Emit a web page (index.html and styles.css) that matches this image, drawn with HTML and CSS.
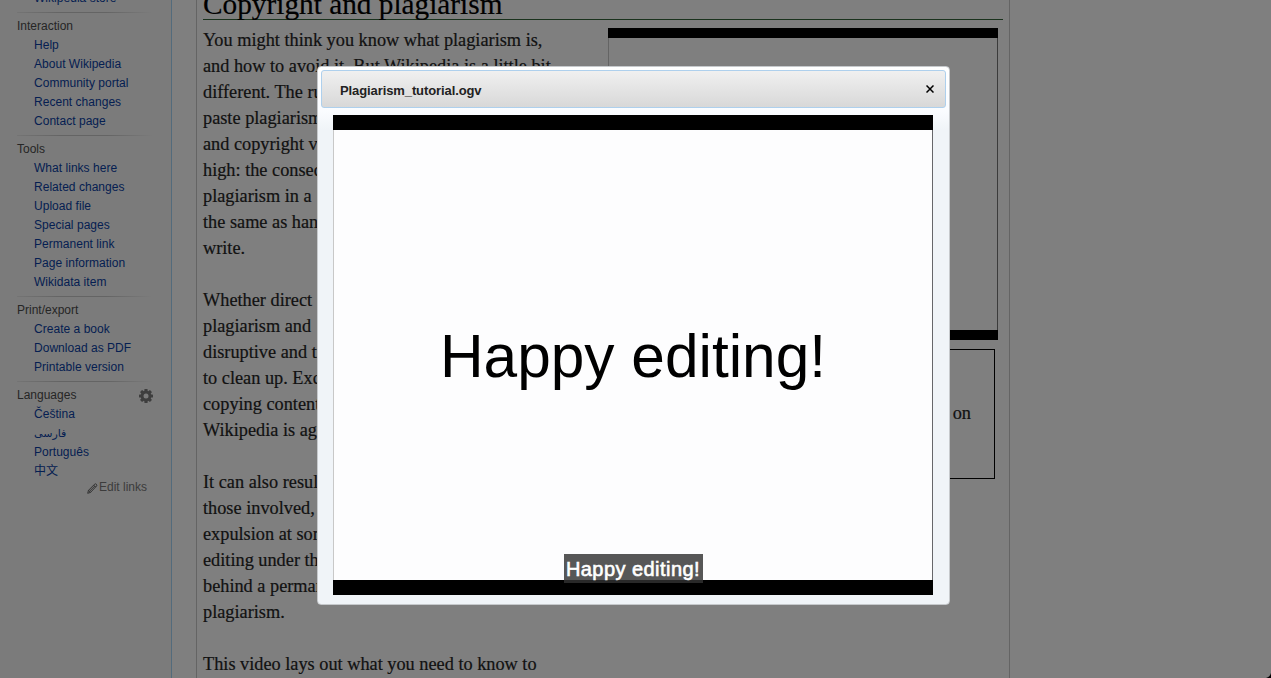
FILE: index.html
```html
<!DOCTYPE html>
<html lang="en">
<head>
<meta charset="utf-8">
<title>Copyright and plagiarism</title>
<link rel="stylesheet" href="styles.css">
</head>
<body>
<div class="page">
  <nav class="sidebar">
    <ul class="links"><li><a>Wikipedia store</a></li></ul>
    <section class="portal">
      <h3>Interaction</h3>
      <ul class="links">
        <li><a>Help</a></li><li><a>About Wikipedia</a></li><li><a>Community portal</a></li><li><a>Recent changes</a></li><li><a>Contact page</a></li>
      </ul>
    </section>
    <section class="portal">
      <h3>Tools</h3>
      <ul class="links">
        <li><a>What links here</a></li><li><a>Related changes</a></li><li><a>Upload file</a></li><li><a>Special pages</a></li><li><a>Permanent link</a></li><li><a>Page information</a></li><li><a>Wikidata item</a></li>
      </ul>
    </section>
    <section class="portal">
      <h3>Print/export</h3>
      <ul class="links">
        <li><a>Create a book</a></li><li><a>Download as PDF</a></li><li><a>Printable version</a></li>
      </ul>
    </section>
    <section class="portal">
      <h3>Languages
        <svg class="gear" viewBox="0 0 14 14"><g fill="#7c7c7c"><rect x="5.4" y="0" width="3.2" height="14" rx=".6"/><rect x="5.4" y="0" width="3.2" height="14" rx=".6" transform="rotate(45 7 7)"/><rect x="5.4" y="0" width="3.2" height="14" rx=".6" transform="rotate(90 7 7)"/><rect x="5.4" y="0" width="3.2" height="14" rx=".6" transform="rotate(135 7 7)"/><circle cx="7" cy="7" r="5.4"/></g><circle cx="7" cy="7" r="2.5" fill="#f6f6f6"/></svg>
      </h3>
      <ul class="links">
        <li><a>Čeština</a></li><li><a class="fa" lang="fa">فارسی</a></li><li><a>Português</a></li><li><a lang="zh">中文</a></li>
      </ul>
      <div class="edit"><svg class="pencil" viewBox="0 0 11 11"><path d="M.7 10.3l.8-3L7.6 1.2q.9-.8 1.8.1t.1 1.8L3.5 9.4zM1.5 7.3l2 2.1M6.7 2.1l2 2M2.6 8.2l5.1-5.1" fill="none" stroke="#565656" stroke-width=".9"/></svg><span>Edit links</span></div>
    </section>
  </nav>
  <main class="content">
    <h2>Copyright and plagiarism</h2>
    <div class="columns">
      <div class="article">
        <p><span>You might think you know what plagiarism is,</span><span>and how to avoid it. But Wikipedia is a little bit</span><span>different. The rules</span><span>paste plagiarism</span><span>and copyright violations</span><span>high: the consequences</span><span>plagiarism in a</span><span>the same as hand</span><span>write.</span></p>
        <p><span>Whether direct</span><span>plagiarism and</span><span>disruptive and time</span><span>to clean up. Except</span><span>copying content</span><span>Wikipedia is against</span></p>
        <p><span>It can also result</span><span>those involved,</span><span>expulsion at some</span><span>editing under the</span><span>behind a permanent</span><span>plagiarism.</span></p>
        <p><span>This video lays out what you need to know to</span></p>
      </div>
      <aside class="media">
        <div class="thumb"></div>
        <div class="note">on</div>
      </aside>
    </div>
  </main>
</div>
<div class="overlay">
  <div class="dialog">
    <header class="titlebar"><span>Plagiarism_tutorial.ogv</span>
      <svg class="close" viewBox="0 0 8 8"><path d="M.5.5l7 7M7.5.5l-7 7" stroke="#000" stroke-width="1.5"/></svg>
    </header>
    <div class="video"><span class="slide">Happy editing!</span><span class="caption">Happy editing!</span></div>
  </div>
  <svg class="corner" viewBox="0 0 5 5"><path d="M5 0v5H0Q4 4 5 0z"/></svg>
</div>
</body>
</html>
```
FILE: styles.css
```css
* { box-sizing: border-box; }
body { margin: 0; height: 678px; overflow: hidden; background: #fff; font-family: "Liberation Sans", "Noto Sans CJK SC", sans-serif; }
.page { display: flex; height: 678px; overflow: hidden; }
.sidebar { width: 172px; flex: none; background: #f6f6f6; border-right: 1px solid #a7d7f9; padding-left: 17px; font-size: 12px; line-height: 21px; height: 678px; }
.links { list-style: none; margin: 0; padding: 0 0 0 17px; color: #0a3fa4; letter-spacing: .03px; }
.links li { height: 19px; white-space: nowrap; }
.sidebar > .links { margin-top: -12px; }
.portal { margin-top: 5px; }
.portal::before { content: ""; display: block; height: 1px; width: 135px; margin: 0 0 3px; background: linear-gradient(to right, #e8e8e8, #c8c8c8 33%, #c8c8c8 66%, #f6f6f6); }
.portal h3 { display: flex; justify-content: space-between; height: 19px; margin: 0; padding-right: 18px; font-size: 12px; font-weight: 400; color: #4d4d4d; }
.gear { width: 14px; height: 14px; margin-top: 4px; }
.fa { font-family: "DejaVu Sans", sans-serif; font-size: 11px; }
.edit { display: flex; align-items: center; justify-content: flex-end; gap: 1px; width: 130px; height: 19px; margin-top: -2px; color: #797979; }
.pencil { width: 11px; height: 11px; margin-top: 1px; }
.content { width: 814px; flex: none; margin-left: 24px; padding: 0 6px; border: solid #c8c8c8; border-width: 0 1px; font-family: "Liberation Serif", serif; font-size: 18.3px; color: #252525; height: 678px; overflow: hidden; -webkit-text-stroke: .2px; }
.content h2 { height: 33px; width: 800px; margin: -13px 0 0; border-bottom: 1px solid #35653a; font-size: 29.3px; line-height: 35px; font-weight: 400; color: #000; white-space: nowrap; }
.columns { display: flex; justify-content: space-between; width: 795px; }
.article { width: 360px; padding-top: 7px; line-height: 26px; }
.article p { margin: 0 0 26px; }
.article span { display: block; white-space: nowrap; }
.media { width: 390px; padding-top: 8px; }
.thumb { height: 312px; border: solid #000; border-width: 10px 0; box-shadow: inset 1px 0 #c8c8c8, inset -1px 0 #777; }
.note { width: 387px; height: 130px; margin-top: 9px; padding: 50px 23px 0 0; border: 1px solid #000; line-height: 26px; text-align: right; }
.overlay { position: absolute; inset: 0; background: rgba(0, 0, 0, .5); }
.dialog { position: absolute; left: 317px; top: 66px; width: 633px; height: 539px; padding: 3px; border: 1px solid #c6c9cc; border-radius: 4px; background: linear-gradient(#fff 0, #fafcff 45px, #f0f4f8 62px); }
.titlebar { display: flex; align-items: center; justify-content: space-between; height: 38px; width: 625px; padding: 2px 11px 0 18px; border: 1px solid #aed0ed; border-radius: 3px; background: linear-gradient(#f0f0f0, #d8d8d8); font-size: 13px; font-weight: 700; color: #222; letter-spacing: -.1px; }
.close { width: 8px; height: 8px; margin-top: -3px; }
.video { display: grid; grid-template-rows: 1fr auto; justify-items: center; width: 600px; height: 480px; margin: 7px 0 0 12px; border: solid #000; border-width: 15px 0; background: #fdfdfe; box-shadow: inset 1px 0 #c8c8c8, inset -1px 0 #66666a; }
.slide { align-self: center; padding-top: 28px; color: #000; font-size: 60.4px; line-height: 68px; white-space: nowrap; }
.caption { height: 29px; width: 139px; margin-bottom: -3px; background: rgba(50, 50, 50, .82); color: #fff; font-size: 20px; line-height: 30px; text-align: center; white-space: nowrap; -webkit-text-stroke: .6px #fff; letter-spacing: .45px; z-index: 1; }
.corner { position: absolute; right: 0; bottom: 0; width: 5px; height: 5px; }
```
